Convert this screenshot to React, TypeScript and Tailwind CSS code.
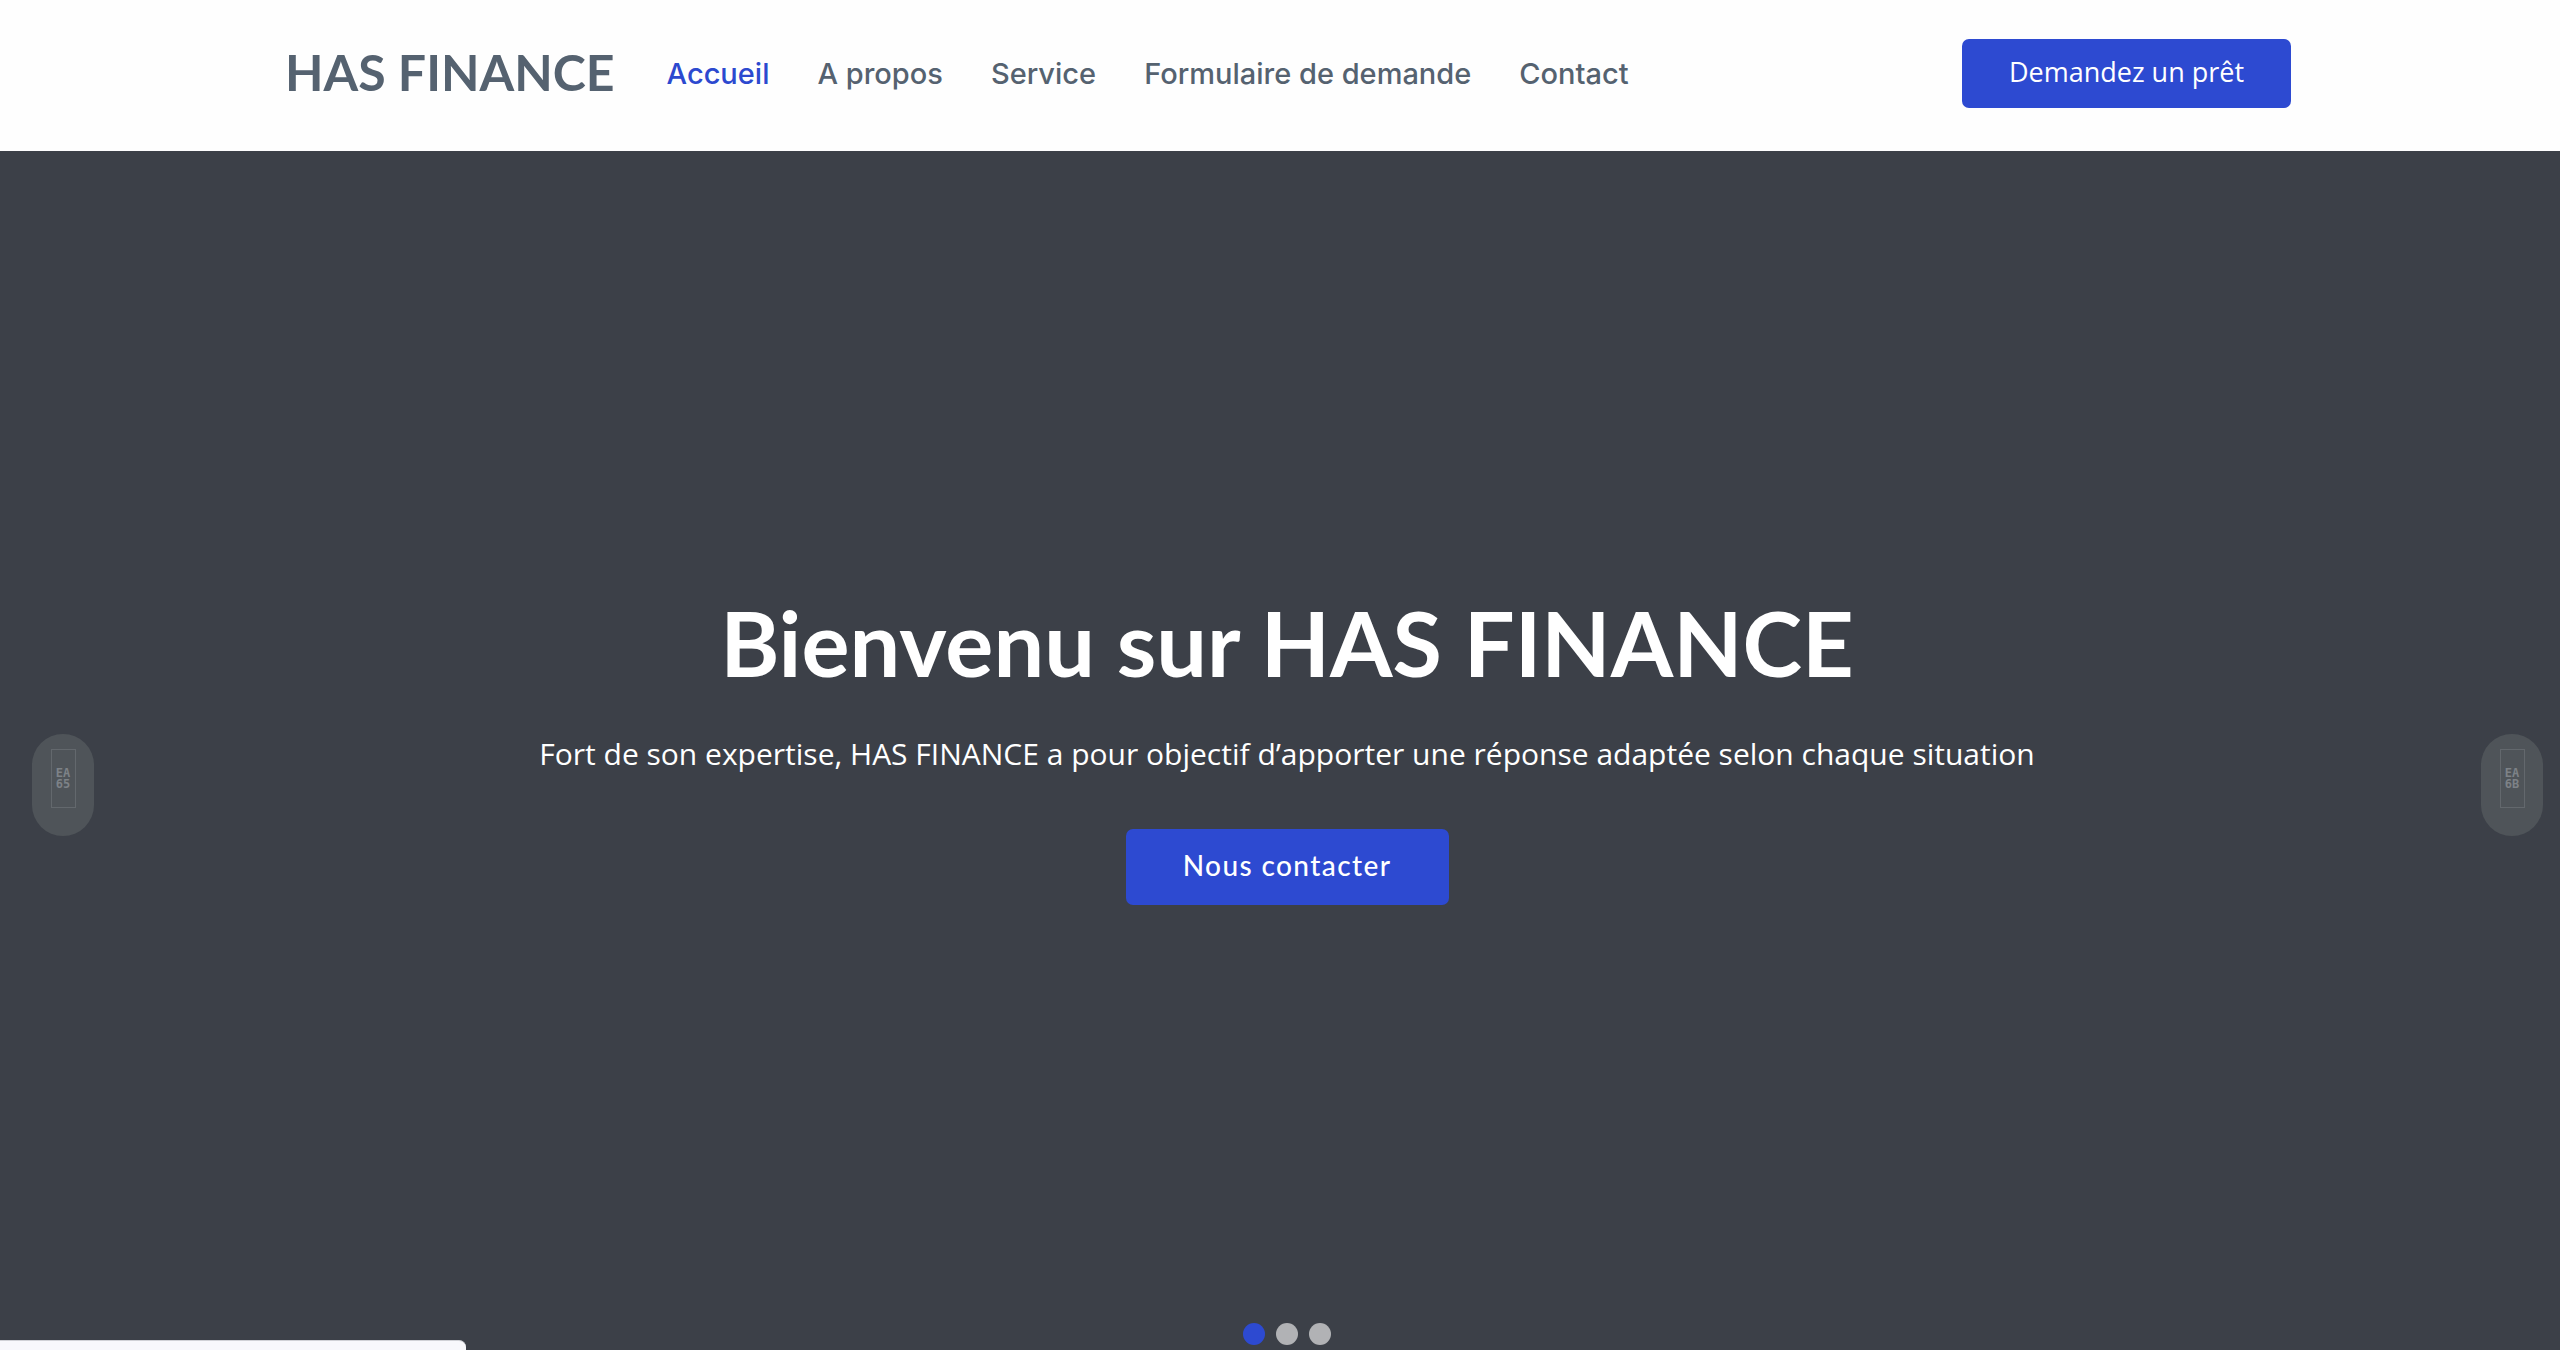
const links = ['Accueil', 'A propos', 'Service', 'Formulaire de demande', 'Contact'];

function Logo() {
  return (
    <a href="#accueil" className="pb-1 font-[Lato,sans-serif] text-[50px] leading-[60px] font-bold whitespace-nowrap text-[#556270]">
      HAS FINANCE
    </a>
  );
}

function SlideButton({ label, code, side }: { label: string; code: [string, string]; side: string }) {
  return (
    <button
      type="button"
      aria-label={label}
      className={`absolute top-[583px] flex h-[102px] w-[62px] justify-center rounded-full bg-[#4f5459] pt-[15px] ${side}`}
    >
      <span className="flex h-[59px] w-[25px] flex-col items-center justify-center border border-[#63686d] font-['DejaVu_Sans_Mono',monospace] text-[12px] leading-[11px] font-bold text-[#7d8287]">
        <span>{code[0]}</span>
        <span>{code[1]}</span>
      </span>
    </button>
  );
}

export default function App() {
  return (
    <div className="flex h-screen flex-col overflow-hidden bg-[#3c4048] font-['Open_Sans',sans-serif]">
      <header className="h-[151px] shrink-0 bg-[#fefefe] pb-1 pl-4">
        <div className="mx-auto flex h-full max-w-[2006px] items-center">
          <Logo />
          <nav aria-label="Navigation principale" className="ml-[52px] flex gap-12 font-[Inter,sans-serif] text-[29px] leading-[40px] font-medium whitespace-nowrap">
            {links.map((link, i) => (
              <a key={link} href="#" className={i === 0 ? 'text-[#2c49cf]' : 'text-[#556270]'}>
                {link}
              </a>
            ))}
          </nav>
          <a href="#pret" className="ml-auto flex h-[69px] w-[329px] items-center justify-center rounded-[7px] bg-[#2d4ad1] pb-1 text-[27px] leading-[40px] whitespace-nowrap text-white">
            Demandez un prêt
          </a>
        </div>
      </header>

      <main className="relative flex flex-1 flex-col items-center justify-center pb-2 pl-[14px] text-white">
        <h1 className="font-[Lato,sans-serif] text-[90px] leading-[106px] font-bold">Bienvenu sur HAS FINANCE</h1>
        <p className="mt-9 text-[30px] leading-[45px]">
          Fort de son expertise, HAS FINANCE a pour objectif d’apporter une réponse adaptée selon chaque situation
        </p>
        <a href="#contact" className="mt-[53px] flex h-[76px] w-[323px] items-center justify-center rounded-[7px] bg-[#2d4ad1] pb-1 font-[Lato,sans-serif] text-[28px] leading-[40px] font-medium tracking-wider">
          Nous contacter
        </a>

        <SlideButton label="Diapositive précédente" code={['EA', '65']} side="left-8" />
        <SlideButton label="Diapositive suivante" code={['EA', '6B']} side="right-[17px]" />

        <div className="absolute inset-x-0 bottom-[5px] flex justify-center gap-[11px] pl-[14px]">
          <button type="button" aria-label="Diapositive 1" className="size-[22px] rounded-full bg-[#2d4ad1]" />
          <button type="button" aria-label="Diapositive 2" className="size-[22px] rounded-full bg-[#b1b2b5]" />
          <button type="button" aria-label="Diapositive 3" className="size-[22px] rounded-full bg-[#b1b2b5]" />
        </div>
        <div className="absolute bottom-0 left-0 h-[10px] w-[466px] rounded-tr-[7px] border-t border-[#d0d1d6] bg-[#f8f8fc]" />
      </main>
    </div>
  );
}
